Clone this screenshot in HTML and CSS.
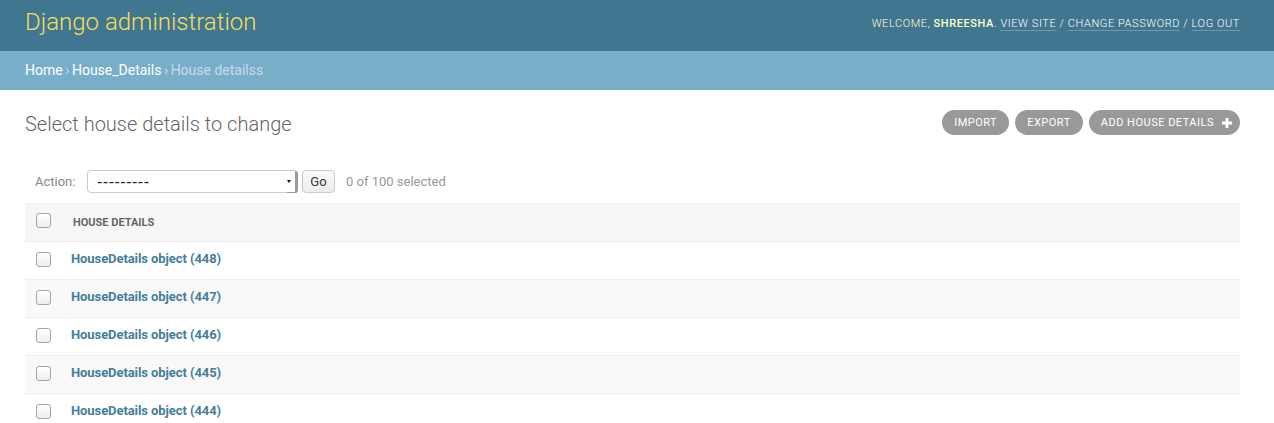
FILE: index.html
```html
<!DOCTYPE html>
<html lang="en">
<head>
<meta charset="utf-8">
<title>Select house details to change | Django site admin</title>
<link rel="stylesheet" href="styles.css">
</head>
<body>
<div class="header">
  <h1 class="branding">Django administration</h1>
  <div class="user-tools">
    Welcome, <strong>shreesha</strong>. <a href="#">View site</a> / <a href="#">Change password</a> / <a href="#">Log out</a>
  </div>
</div>
<div class="breadcrumbs">
  <a href="#">Home</a><span class="sep">›</span><a href="#">House_Details</a><span class="sep">›</span>House detailss
</div>
<div class="content">
  <div class="title-row">
    <h1 class="page-title">Select house details to change</h1>
    <ul class="object-tools">
      <li><a href="#" class="tool">Import</a></li>
      <li><a href="#" class="tool">Export</a></li>
      <li><a href="#" class="tool addlink">Add house details
        <svg class="plus" width="10" height="10" viewBox="0 0 10 10"><path d="M3.6 0h2.8v3.6H10v2.8H6.4V10H3.6V6.4H0V3.6h3.6z" fill="#fff"/></svg></a></li>
    </ul>
  </div>
  <div class="actions">
    <label class="action-label">Action:</label>
    <div class="select-wrap">
      <select class="action-select"><option>---------</option></select>
      <span class="select-arrow"></span>
    </div>
    <button class="go" type="button">Go</button>
    <span class="action-counter">0 of 100 selected</span>
  </div>
  <table class="result-list">
    <thead>
      <tr>
        <th class="check-col"><input type="checkbox" class="cb"></th>
        <th class="text-col">House details</th>
      </tr>
    </thead>
    <tbody>
      <tr class="row1"><td class="check-col"><input type="checkbox" class="cb"></td><th class="link-col"><a href="#">HouseDetails object (448)</a></th></tr>
      <tr class="row2"><td class="check-col"><input type="checkbox" class="cb"></td><th class="link-col"><a href="#">HouseDetails object (447)</a></th></tr>
      <tr class="row1"><td class="check-col"><input type="checkbox" class="cb"></td><th class="link-col"><a href="#">HouseDetails object (446)</a></th></tr>
      <tr class="row2"><td class="check-col"><input type="checkbox" class="cb"></td><th class="link-col"><a href="#">HouseDetails object (445)</a></th></tr>
      <tr class="row1"><td class="check-col"><input type="checkbox" class="cb"></td><th class="link-col"><a href="#">HouseDetails object (444)</a></th></tr>
    </tbody>
  </table>
</div>
</body>
</html>
```
FILE: styles.css
```css
* { box-sizing: border-box; }
html, body {
  margin: 0;
  padding: 0;
}
body {
  font-family: Roboto, "Liberation Sans", Arial, sans-serif;
  font-size: 14px;
  color: #333;
  background: #fff;
}
a { text-decoration: none; }

.header {
  height: 51px;
  padding: 10px 34px 0 25px;
  background: #417690;
  display: flex;
  justify-content: space-between;
  align-items: flex-start;
}
.branding {
  margin: 0;
  font-size: 24px;
  line-height: 24px;
  font-weight: 300;
  color: #f5dd5d;
}
.user-tools {
  margin-top: 7px;
  font-size: 11px;
  line-height: 13px;
  font-weight: 300;
  letter-spacing: 0.58px;
  text-transform: uppercase;
  color: #ffc;
}
.user-tools strong { font-weight: 500; }
.user-tools a {
  color: #fff;
  border-bottom: 1px solid rgba(255, 255, 255, 0.25);
}

.breadcrumbs {
  background: #79aec8;
  padding: 10px 34px 10px 25px;
  line-height: 19px;
  font-size: 14px;
  color: #c4dce8;
}
.breadcrumbs a { color: #fff; }
.breadcrumbs .sep { margin: 0 2.5px; }

.content {
  padding: 20px 34px 0 25px;
}
.title-row {
  display: flex;
  justify-content: space-between;
  align-items: flex-start;
}
.page-title {
  margin: 2px 0 0;
  font-size: 20px;
  line-height: 24px;
  font-weight: 300;
  color: #666;
}
.object-tools {
  list-style: none;
  margin: 0;
  padding: 0;
  display: flex;
  gap: 6px;
}
.tool {
  display: flex;
  align-items: center;
  height: 25px;
  padding: 0 12px;
  background: #999;
  color: #fff;
  border-radius: 15px;
  font-size: 11px;
  line-height: 19px;
  font-weight: 400;
  letter-spacing: 0.5px;
  text-transform: uppercase;
}
.tool.addlink { padding-right: 8px; }
.plus { margin-left: 8px; }

.actions {
  margin-top: 23px;
  padding: 10px;
  height: 44px;
  display: flex;
  align-items: center;
  color: #999;
  font-size: 13px;
}
.action-label {
  color: #888;
  width: 52px;
}
.select-wrap {
  position: relative;
  width: 211px;
  height: 23px;
}
.action-select {
  -webkit-appearance: none;
  appearance: none;
  width: 100%;
  height: 23px;
  margin: 0;
  padding: 0 0 0 9px;
  border: 1px solid #ccc;
  border-radius: 4px;
  background: #fff;
  font-family: "Liberation Sans", Arial, sans-serif;
  font-size: 16px;
  letter-spacing: 0.5px;
  color: #222;
}
.select-arrow {
  position: absolute;
  right: 0;
  top: 1px;
  width: 11px;
  height: 22px;
  border-right: 3px solid #9a9a9a;
  border-bottom: 1px solid #9a9a9a;
  border-radius: 0 3px 3px 0;
}
.select-arrow::after {
  content: "";
  position: absolute;
  left: 0;
  top: 9px;
  border-left: 2.5px solid transparent;
  border-right: 2.5px solid transparent;
  border-top: 3.5px solid #111;
}
.go {
  margin-left: 4px;
  width: 33px;
  height: 23px;
  padding: 0;
  border: 1px solid #ccc;
  border-radius: 4px;
  background: linear-gradient(#fafafa, #ececec);
  font-family: Roboto, "Liberation Sans", Arial, sans-serif;
  font-size: 13px;
  color: #333;
}
.action-counter {
  margin-left: 11px;
  color: #999;
}

.result-list {
  width: 100%;
  border-collapse: collapse;
  font-size: 13px;
}
.result-list thead th {
  background: #f6f6f6;
  border-top: 1px solid #eee;
  border-bottom: 1px solid #eee;
  height: 38px;
  padding: 0;
  vertical-align: top;
  text-align: left;
}
.result-list thead th.check-col {
  width: 36px;
  padding: 9px 0 0 11px;
}
.result-list thead th.text-col {
  padding: 10px 10px 0 12px;
  font-size: 11px;
  line-height: 18px;
  font-weight: 700;
  color: #666;
  text-transform: uppercase;
}
.result-list tbody td,
.result-list tbody th {
  border-bottom: 1px solid #eee;
  height: 38px;
  padding: 8px 10px;
  vertical-align: top;
  text-align: left;
  line-height: 18px;
}
.result-list tbody td.check-col {
  padding: 10px 0 0 11px;
}
.result-list tbody .row2 td,
.result-list tbody .row2 th { background: #f9f9f9; }
.link-col a {
  color: #447e9b;
  font-weight: 700;
  letter-spacing: -0.08px;
}
.cb {
  -webkit-appearance: none;
  appearance: none;
  display: block;
  margin: 0;
  width: 15px;
  height: 15px;
  border: 1px solid #a6a6a6;
  border-radius: 3px;
  background: linear-gradient(#fff, #eee);
}
```
